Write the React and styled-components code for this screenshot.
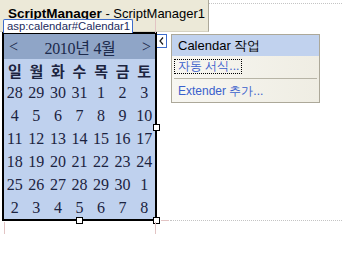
import React from "react";
import styled, { createGlobalStyle } from "styled-components";

const GlobalStyle = createGlobalStyle`
  html, body {
    margin: 0;
    padding: 0;
    background: #fff;
  }
`;

const Surface = styled.div`
  position: relative;
  width: 342px;
  height: 266px;
  overflow: hidden;
  background: #fff;
  font-family: "Liberation Sans", Arial, sans-serif;
`;

const TopRow = styled.div`
  display: flex;
  align-items: flex-start;
`;

const ScriptBar = styled.div`
  box-sizing: border-box;
  width: 209px;
  height: 32px;
  padding: 6px 0 0 8px;
  background: #ece9d8;
  border-right: 1px solid #aca899;
  border-bottom: 1px solid #d6d2c2;
  font-size: 13px;
  color: #000;
  white-space: nowrap;

  b {
    font-size: 13.5px;
  }
`;

const DottedGuide = styled.div`
  flex: 1;
  margin-top: 3px;
  border-top: 1px dotted #c4c4c4;
`;

const ControlRow = styled.div`
  display: flex;
  align-items: flex-start;
`;

const CalendarFrame = styled.div`
  position: relative;
  box-sizing: border-box;
  width: 155px;
  margin-left: 2px;
  border: 2px solid #000;
  background: #bfd1ee;
`;

const ElementTag = styled.div`
  position: absolute;
  top: -15px;
  left: -1px;
  box-sizing: border-box;
  height: 14px;
  padding: 0 2px 0 3px;
  background: #fff;
  border: 1px solid #3d6ccb;
  border-bottom: none;
  border-radius: 2px 2px 0 0;
  font-size: 11.3px;
  line-height: 13px;
  color: #1b2a5e;
  white-space: nowrap;
`;

const TitleRow = styled.div`
  display: flex;
  align-items: center;
  justify-content: space-between;
  height: 25px;
  padding: 0 4px 0 5px;
  background: #8fa5c7;
  font-family: "Liberation Serif", "Noto Sans CJK KR", serif;
  font-size: 16px;
  color: #1c2a4c;
`;

const MonthLabel = styled.span`
  letter-spacing: -0.3px;
`;

const DayTable = styled.table`
  width: 100%;
  table-layout: fixed;
  border-collapse: collapse;
  border-spacing: 0;
`;

const HeadCell = styled.th`
  height: 22px;
  padding: 0;
  font-family: "Noto Sans CJK KR", sans-serif;
  font-size: 15px;
  font-weight: 700;
  color: #1c2440;
  text-align: center;
`;

const DayCell = styled.td`
  height: 23px;
  padding: 0;
  font-family: "Liberation Serif", serif;
  font-size: 16px;
  color: #1b2340;
  text-align: center;
`;

const Handle = styled.span`
  position: absolute;
  width: 7px;
  height: 7px;
  box-sizing: border-box;
  background: #fff;
  border: 1px solid #000;
  left: ${(p) => p.x}px;
  top: ${(p) => p.y}px;
`;

const Guide = styled.span`
  position: absolute;
  left: ${(p) => p.x}px;
  top: ${(p) => p.y}px;
  width: ${(p) => p.w}px;
  height: ${(p) => p.h}px;
  background: #e2c4c4;
`;

const BottomDots = styled.span`
  position: absolute;
  left: 166px;
  top: 186px;
  width: 200px;
  border-top: 1px dotted #c4c4c4;
`;

const SmartTag = styled.div`
  display: flex;
  align-items: flex-start;
  gap: 4px;
  margin: 2px 0 0 -1px;
`;

const ArrowButton = styled.div`
  box-sizing: border-box;
  width: 11px;
  height: 14px;
  background: #fff;
  border: 1px solid #3d6ccb;
  display: flex;
  align-items: center;
  justify-content: center;
`;

const Panel = styled.div`
  box-sizing: border-box;
  width: 149px;
  height: 69px;
  border: 1px solid #aca899;
  background: linear-gradient(90deg, #f7f6f1 0%, #efede3 100%);
`;

const PanelHeader = styled.div`
  height: 21px;
  padding-left: 6px;
  background: #c1d2ee;
  font-size: 13px;
  line-height: 21px;
  color: #000;
`;

const PanelBody = styled.div`
  padding: 3px 2px 0 2px;
  font-size: 12px;
  line-height: 13px;
`;

const ActionLink = styled.div`
  width: fit-content;
  padding: 0 2px 0 3px;
  border: 1px dotted ${(p) => (p.focused ? "#000" : "transparent")};
  font-size: 12px;
  line-height: 13px;
  color: #3a60cc;
`;

const Divider = styled.div`
  height: 1px;
  margin: 4px 0 5px 0;
  background: #b7b4a6;
`;

const weeks = [
  [28, 29, 30, 31, 1, 2, 3],
  [4, 5, 6, 7, 8, 9, 10],
  [11, 12, 13, 14, 15, 16, 17],
  [18, 19, 20, 21, 22, 23, 24],
  [25, 26, 27, 28, 29, 30, 1],
  [2, 3, 4, 5, 6, 7, 8],
];

const dayNames = ["일", "월", "화", "수", "목", "금", "토"];

const LeftChevron = () => (
  <svg width="5" height="8" viewBox="0 0 5 8">
    <path d="M4 0.5 L1 4 L4 7.5" fill="none" stroke="#1a1a1a" strokeWidth="1.2" />
  </svg>
);

export default function App() {
  return (
    <Surface>
      <GlobalStyle />
      <TopRow>
        <ScriptBar>
          <b>ScriptManager</b> - ScriptManager1
        </ScriptBar>
        <DottedGuide />
      </TopRow>
      <ControlRow>
        <CalendarFrame>
          <ElementTag>asp:calendar#Calendar1</ElementTag>
          <TitleRow>
            <span>&lt;</span>
            <MonthLabel>2010년 4월</MonthLabel>
            <span>&gt;</span>
          </TitleRow>
          <DayTable>
            <thead>
              <tr>
                {dayNames.map((d) => (
                  <HeadCell key={d}>{d}</HeadCell>
                ))}
              </tr>
            </thead>
            <tbody>
              {weeks.map((week, i) => (
                <tr key={i}>
                  {week.map((day, j) => (
                    <DayCell key={j}>{day}</DayCell>
                  ))}
                </tr>
              ))}
            </tbody>
          </DayTable>
          <Handle x={149} y={90} />
          <Handle x={72} y={183} />
          <Handle x={149} y={183} />
          <Guide x={151} y={-16} w={1} h={15} />
          <Guide x={0} y={188} w={1} h={12} />
          <Guide x={151} y={188} w={1} h={12} />
          <Guide x={157} y={186} w={8} h={1} />
          <BottomDots />
        </CalendarFrame>
        <SmartTag>
          <ArrowButton>
            <LeftChevron />
          </ArrowButton>
          <Panel>
            <PanelHeader>Calendar 작업</PanelHeader>
            <PanelBody>
              <ActionLink focused>자동 서식...</ActionLink>
              <Divider />
              <ActionLink>Extender 추가...</ActionLink>
            </PanelBody>
          </Panel>
        </SmartTag>
      </ControlRow>
    </Surface>
  );
}
